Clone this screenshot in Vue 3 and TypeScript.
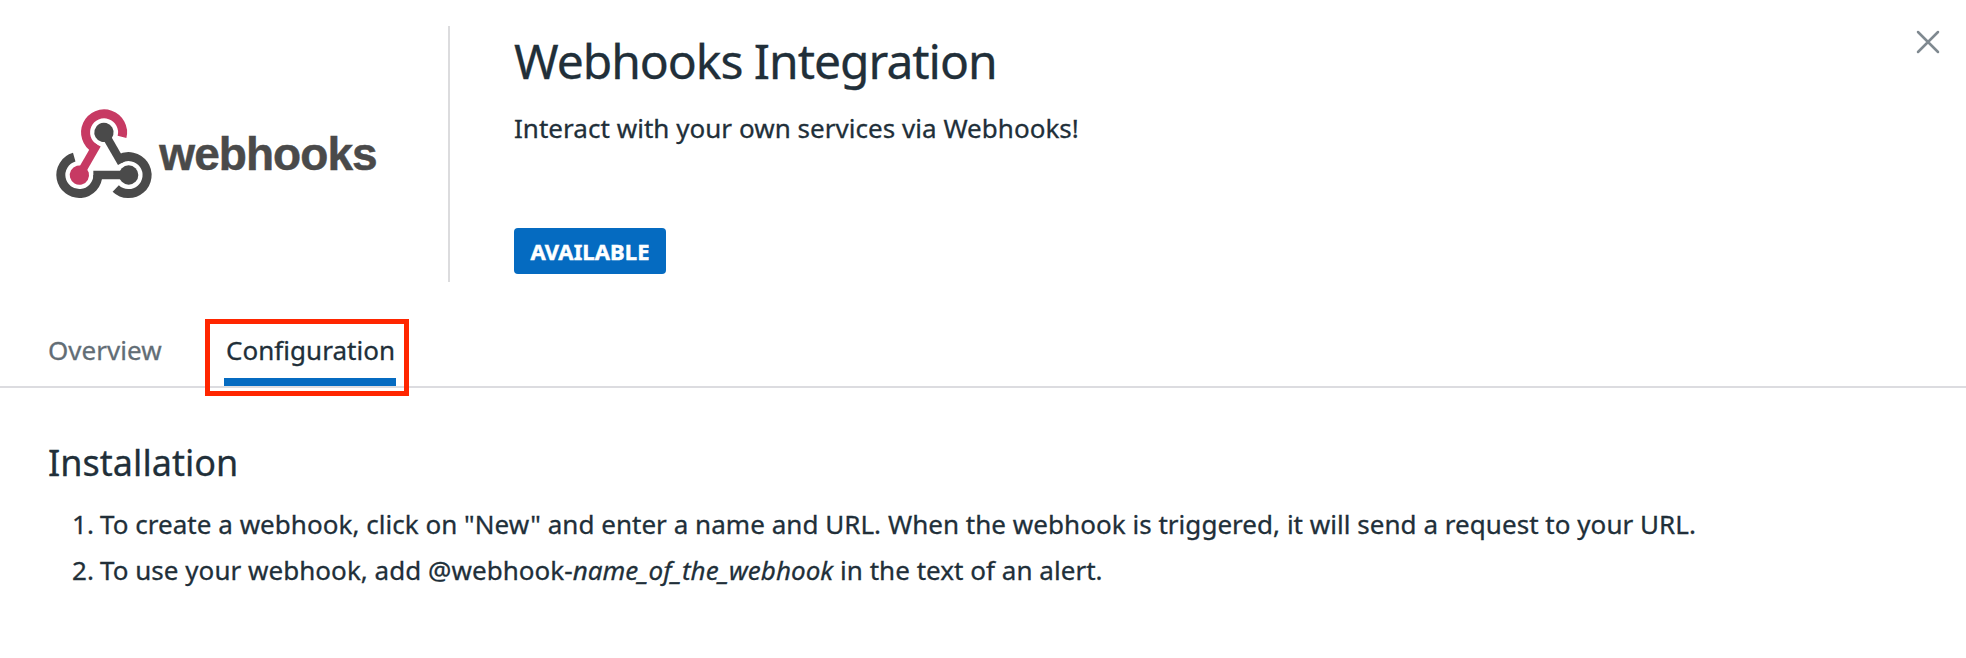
<script setup lang="ts">
import { ref } from 'vue'

const tabs: string[] = ['Overview', 'Configuration']
const active = ref('Configuration')

const arms = [
  { color: '#4a4a4a', angle: 0 },
  { color: '#4a4a4a', angle: 240 },
  { color: '#c73a63', angle: 120 },
]
</script>

<template>
  <main class="panel">
    <header class="header">
      <div class="brand">
        <svg class="logo" viewBox="0 0 1050 345" role="img" aria-label="webhooks">
          <g
            v-for="arm in arms"
            :key="arm.angle"
            :transform="`rotate(${arm.angle} 192 197.5)`"
            :stroke="arm.color"
            :fill="arm.color"
          >
            <path d="M173.5 240A55.5 55.5 0 1 1 102.7 186.6" fill="none" stroke-width="27" />
            <path d="M160 240H266" stroke-width="25" />
            <circle cx="266" cy="240" r="29" stroke="none" />
          </g>
          <text class="wordmark" x="358" y="224" textLength="655">webhooks</text>
        </svg>
      </div>
      <div class="intro">
        <h1>Webhooks Integration</h1>
        <p>Interact with your own services via Webhooks!</p>
        <span class="badge">AVAILABLE</span>
      </div>
      <button class="close" aria-label="Close">
        <svg viewBox="0 0 24 24"><path d="M2 2L22 22M22 2L2 22" /></svg>
      </button>
    </header>

    <nav class="tabs">
      <button
        v-for="tab in tabs"
        :key="tab"
        class="tab"
        :class="{ active: tab === active }"
        @click="active = tab"
      >
        <span>{{ tab }}</span>
      </button>
    </nav>

    <section class="content">
      <h2>Installation</h2>
      <ol>
        <li><span class="num">1.</span><span>To create a webhook, click on "New" and enter a name and URL. When the webhook is triggered, it will send a request to your URL.</span></li>
        <li><span class="num">2.</span><span>To use your webhook, add @webhook-<em>name_of_the_webhook</em> in the text of an alert.</span></li>
      </ol>
    </section>
  </main>
</template>

<style>
body {
  background: #fff;
}
</style>

<style scoped>
.panel {
  box-sizing: border-box;
  height: 658px;
  overflow: hidden;
  font-family: 'Noto Sans', sans-serif;
  font-size: 26px;
  letter-spacing: 0.035px;
  color: #212f39;
  -webkit-text-stroke-width: 0.3px;
}
.header {
  display: flex;
  height: 256px;
  padding-top: 26px;
}
.brand {
  box-sizing: border-box;
  width: 450px;
  padding: 69px 0 0 40px;
  border-right: 2px solid #dcdcde;
}
.logo {
  display: block;
  width: 350px;
  height: 115px;
}
.wordmark {
  font-family: 'Liberation Sans', Arial, sans-serif;
  font-weight: 700;
  font-size: 138px;
  letter-spacing: 0;
  fill: #4a4a4a;
  stroke: #4a4a4a;
  stroke-width: 1.5px;
}
.intro {
  flex: 1;
  padding-left: 64px;
}
h1,
h2,
p,
ol {
  margin: 0;
  font-weight: 400;
}
h1 {
  margin-top: 2px;
  font-size: 48px;
  line-height: 66px;
  letter-spacing: -1.03px;
}
p {
  margin-top: 16px;
  line-height: 36px;
}
.badge {
  display: flex;
  align-items: center;
  justify-content: center;
  width: 152px;
  height: 46px;
  margin-top: 82px;
  border-radius: 4px;
  background: #056bc1;
  color: #fff;
  font-size: 22px;
  font-weight: 700;
  letter-spacing: 0.1px;
  -webkit-text-stroke-width: 0.5px;
}
button {
  padding: 0;
  border: 0;
  background: none;
  font: inherit;
  letter-spacing: inherit;
  color: inherit;
}
.close {
  align-self: flex-start;
  width: 24px;
  height: 24px;
  margin: 4px 26px 0 0;
}
.close svg {
  display: block;
  fill: none;
  stroke: #7f8990;
  stroke-width: 2.5;
  stroke-linecap: round;
}
.tabs {
  box-sizing: border-box;
  display: flex;
  gap: 43px;
  height: 69px;
  margin-top: 37px;
  padding-left: 48px;
  border-bottom: 2px solid #dcdce0;
}
.tab {
  display: flex;
  align-items: flex-start;
  box-sizing: border-box;
  width: 114px;
  height: 77px;
  color: #626d75;
}
.tab span {
  box-sizing: border-box;
  padding-top: 13px;
  line-height: 36px;
}
.tab.active {
  width: 204px;
  padding-left: 14px;
  border: 5px solid #ff2600;
  color: #212f39;
}
.tab.active span {
  width: 172px;
  height: 62px;
  padding: 8px 0 0 2px;
  text-align: left;
  white-space: nowrap;
  border-bottom: 8px solid #056bc1;
}
.content {
  padding: 50px 48px 0;
}
h2 {
  font-size: 36px;
  line-height: 50px;
}
ol {
  padding: 13px 0 0 24px;
  list-style: none;
}
li {
  display: flex;
  height: 46px;
  line-height: 46px;
  white-space: nowrap;
}
.num {
  width: 28px;
}
</style>
